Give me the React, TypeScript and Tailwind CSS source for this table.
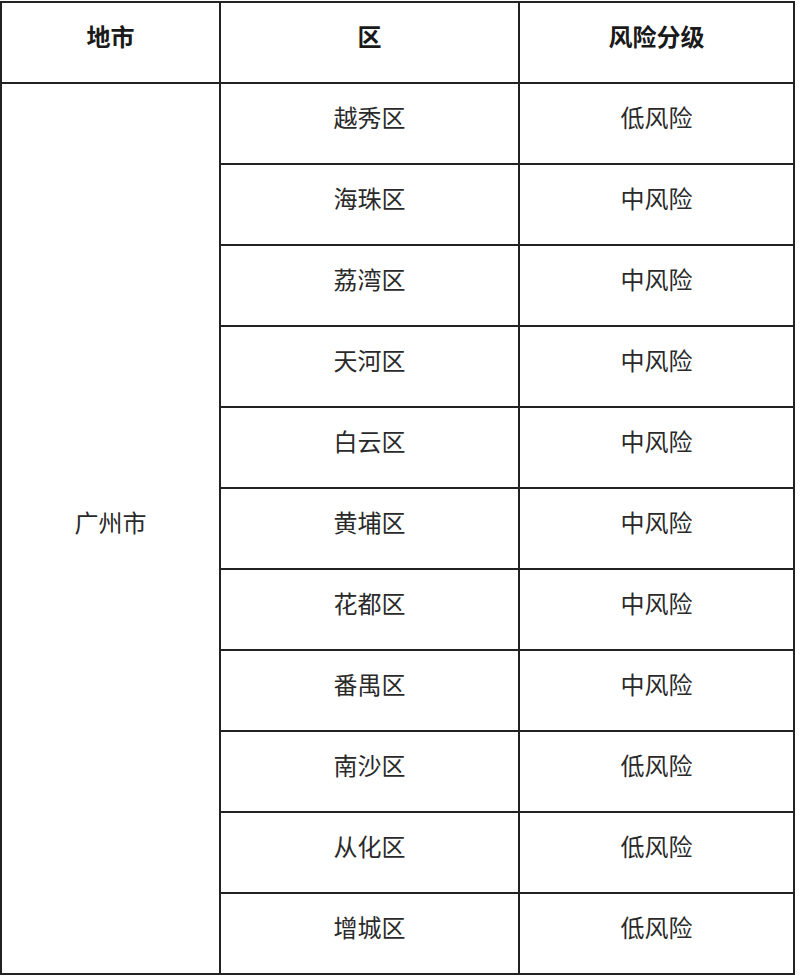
const districts: [string, string][] = [
  ["越秀区", "低风险"],
  ["海珠区", "中风险"],
  ["荔湾区", "中风险"],
  ["天河区", "中风险"],
  ["白云区", "中风险"],
  ["黄埔区", "中风险"],
  ["花都区", "中风险"],
  ["番禺区", "中风险"],
  ["南沙区", "低风险"],
  ["从化区", "低风险"],
  ["增城区", "低风险"],
]

const cell = "border-2 border-[#222] text-center align-middle pb-[10px]"

export default function App() {
  return (
    <div
      className="min-h-[979px] bg-white pt-px text-[#2a2a2a]"
      style={{ fontFamily: '"Liberation Serif", "Noto Sans CJK SC", serif' }}
    >
      <table className="w-[793px] table-fixed border-collapse">
        <colgroup>
          <col className="w-[219px]" />
          <col className="w-[299px]" />
          <col className="w-[275px]" />
        </colgroup>
        <thead>
          <tr className="h-[81px] text-[24px] font-bold text-[#1a1a1a]">
            <th className={cell}>地市</th>
            <th className={cell}>区</th>
            <th className={cell}>风险分级</th>
          </tr>
        </thead>
        <tbody className="text-[24px]">
          {districts.map(([name, level], i) => (
            <tr key={name} className="h-[81px]">
              {i === 0 && (
                <td rowSpan={districts.length} className={cell}>
                  广州市
                </td>
              )}
              <td className={cell}>{name}</td>
              <td className={cell}>{level}</td>
            </tr>
          ))}
        </tbody>
      </table>
    </div>
  )
}
